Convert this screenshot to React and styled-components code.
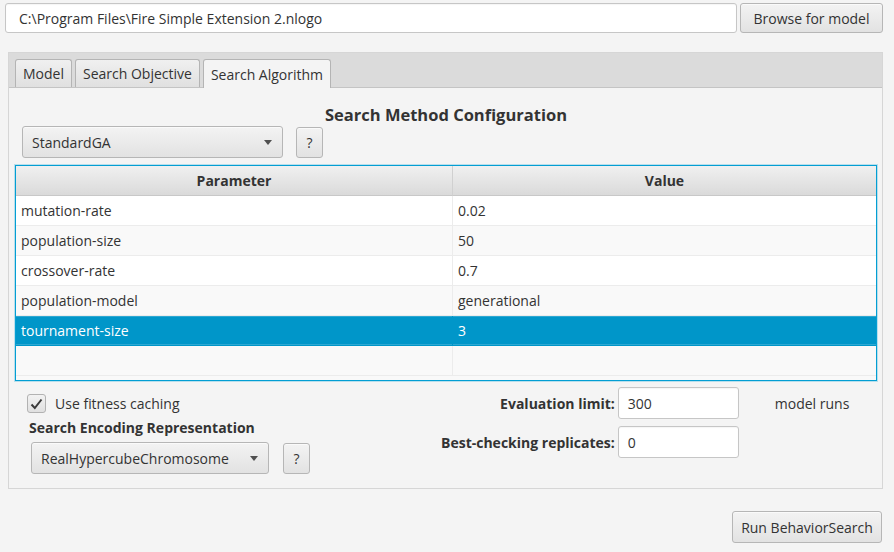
import React from "react";
import styled, { createGlobalStyle } from "styled-components";

const GlobalStyle = createGlobalStyle`
  html, body {
    margin: 0;
    padding: 0;
    background: #f4f4f4;
  }
  body {
    font-family: "Open Sans", "Noto Sans", sans-serif;
    font-size: 14px;
    color: #333;
  }
  * { box-sizing: border-box; }
`;

const Page = styled.div`
  width: 894px;
  height: 552px;
  padding: 3px 11px 0 5px;
  display: flex;
  flex-direction: column;
`;

const TopRow = styled.div`
  display: flex;
  gap: 3px;
  height: 30px;
`;

const TextField = styled.div`
  flex: ${(p) => (p.$grow ? 1 : "none")};
  width: ${(p) => (p.$width ? `${p.$width}px` : "auto")};
  height: ${(p) => p.$height || 30}px;
  background: #fff;
  border: 1px solid #c6c6c6;
  border-radius: 3px;
  box-shadow: inset 0 1px 1px rgba(0, 0, 0, 0.04);
  display: flex;
  align-items: center;
  padding: 0 ${(p) => p.$pad || 13}px;
  white-space: nowrap;
  overflow: hidden;
`;

const Button = styled.div`
  height: ${(p) => p.$height || 30}px;
  width: ${(p) => (p.$width ? `${p.$width}px` : "auto")};
  padding: 0 ${(p) => p.$pad || 12}px;
  display: flex;
  align-items: center;
  justify-content: center;
  background: linear-gradient(#f3f3f3, #e2e2e2);
  border: 1px solid #b6b6b6;
  border-radius: 3px;
  box-shadow: inset 0 1px 0 #fafafa;
  white-space: nowrap;
  flex: none;
`;

const TabPane = styled.div`
  margin: 19px 0 0 3px;
  width: 875px;
  height: 437px;
  display: flex;
  flex-direction: column;
  border: 1px solid #d6d6d6;
`;

const TabHeader = styled.div`
  height: 35px;
  background: #dbdbdb;
  display: flex;
  align-items: flex-end;
  gap: 3px;
  padding-left: 6px;
  border-bottom: 1px solid #c4c4c4;
`;

const Tab = styled.div`
  padding: 0 7px;
  display: flex;
  align-items: center;
  border: 1px solid #b4b4b4;
  border-bottom: none;
  border-radius: 3px 3px 0 0;
  background: ${(p) =>
    p.$active ? "#f4f4f4" : "linear-gradient(#f0f0f0, #e0e0e0)"};
  margin-bottom: ${(p) => (p.$active ? "-1px" : "0")};
  height: ${(p) => (p.$active ? "29px" : "28px")};
`;

const Content = styled.div`
  flex: 1;
  background: #f4f4f4;
  padding: 0 5px 0 6px;
  display: flex;
  flex-direction: column;
`;

const Title = styled.div`
  text-align: center;
  font-weight: 700;
  font-size: 16.5px;
  height: 38px;
  padding-top: 15px;
  line-height: 24px;
`;

const ComboRow = styled.div`
  display: flex;
  align-items: center;
  gap: ${(p) => p.$gap || 13}px;
  margin-left: ${(p) => p.$indent || 0}px;
  margin-top: ${(p) => p.$top || 0}px;
`;

const Combo = styled(Button)`
  justify-content: space-between;
  width: ${(p) => p.$width}px;
  height: 32px;
  padding: 0 10px 0 9px;
`;

const Arrow = styled.span`
  width: 0;
  height: 0;
  border-left: 4.5px solid transparent;
  border-right: 4.5px solid transparent;
  border-top: 5px solid #505050;
`;

const HelpButton = styled(Button)`
  width: 27px;
  height: 31px;
  padding: 0;
`;

const Table = styled.div`
  margin-top: 7px;
  height: 216px;
  border: 1px solid #039ed3;
  box-shadow: 0 0 0 1px rgba(3, 158, 211, 0.25);
  background: #f9f9f9;
  display: flex;
  flex-direction: column;
  overflow: hidden;
`;

const Grid = styled.div`
  display: grid;
  grid-template-columns: 437px 1fr;
`;

const HeaderCell = styled.div`
  height: 30px;
  display: flex;
  align-items: center;
  justify-content: center;
  font-weight: 700;
  background: linear-gradient(#f0f0f0, #dadada);
  border-bottom: 1px solid #c8c8c8;
  border-right: ${(p) => (p.$last ? "none" : "1px solid #d0d0d0")};
`;

const Cell = styled.div`
  height: 30px;
  display: flex;
  align-items: center;
  padding-left: 5px;
  background: ${(p) => (p.$selected ? "#0096c9" : p.$odd ? "#f9f9f9" : "#fff")};
  color: ${(p) => (p.$selected ? "#fff" : "#333")};
  border-bottom: 1px solid ${(p) => (p.$selected ? "#0096c9" : "#ececec")};
  border-right: ${(p) =>
    p.$last ? "none" : `1px solid ${p.$selected ? "#0096c9" : "#ececec"}`};
  box-shadow: ${(p) =>
    p.$selected ? "inset 0 1px 0 #2ea8d2, inset 0 -1px 0 #2ea8d2" : "none"};
`;

const Bottom = styled.div`
  display: flex;
  align-items: flex-start;
  margin-top: 6px;
`;

const LeftColumn = styled.div`
  width: 426px;
  padding-left: 12px;
  display: flex;
  flex-direction: column;
`;

const CheckRow = styled.div`
  display: flex;
  align-items: center;
  gap: 9px;
  height: 19px;
  margin-top: 7px;
`;

const CheckBox = styled.div`
  width: 19px;
  height: 19px;
  border: 1px solid #b2b2b2;
  border-radius: 3px;
  background: linear-gradient(#f2f2f2, #e0e0e0);
  display: flex;
  align-items: center;
  justify-content: center;
`;

const SectionLabel = styled.div`
  font-weight: 700;
  margin: 5px 0 0 2px;
  line-height: 20px;
`;

const FormGrid = styled.div`
  display: grid;
  grid-template-columns: auto 121px auto;
  align-content: start;
  column-gap: 3px;
  row-gap: 7px;
  align-items: center;
`;

const FieldLabel = styled.div`
  font-weight: 700;
  text-align: right;
`;

const Unit = styled.div`
  padding-left: 33px;
`;

const Footer = styled.div`
  display: flex;
  justify-content: flex-end;
  margin-top: 22px;
  padding-right: 1px;
`;

const rows = [
  ["mutation-rate", "0.02"],
  ["population-size", "50"],
  ["crossover-rate", "0.7"],
  ["population-model", "generational"],
  ["tournament-size", "3"],
  ["", ""],
];

export default function App() {
  return (
    <>
      <GlobalStyle />
      <Page>
        <TopRow>
          <TextField $grow>C:\Program Files\Fire Simple Extension 2.nlogo</TextField>
          <Button $width={143}>Browse for model</Button>
        </TopRow>
        <TabPane>
          <TabHeader>
            <Tab>Model</Tab>
            <Tab>Search Objective</Tab>
            <Tab $active>Search Algorithm</Tab>
          </TabHeader>
          <Content>
            <Title>Search Method Configuration</Title>
            <ComboRow $indent={7}>
              <Combo $width={261}>
                StandardGA
                <Arrow />
              </Combo>
              <HelpButton>?</HelpButton>
            </ComboRow>
            <Table>
              <Grid>
                <HeaderCell>Parameter</HeaderCell>
                <HeaderCell $last>Value</HeaderCell>
                {rows.map(([name, value], i) => (
                  <React.Fragment key={i}>
                    <Cell $odd={i % 2 === 1} $selected={i === 4}>
                      {name}
                    </Cell>
                    <Cell $odd={i % 2 === 1} $selected={i === 4} $last>
                      {value}
                    </Cell>
                  </React.Fragment>
                ))}
              </Grid>
            </Table>
            <Bottom>
              <LeftColumn>
                <CheckRow>
                  <CheckBox>
                    <svg width="13" height="12" viewBox="0 0 13 12">
                      <path
                        d="M1.5 6.5 L4.8 10 L11.5 1.5"
                        fill="none"
                        stroke="#3a3a3a"
                        strokeWidth="2"
                      />
                    </svg>
                  </CheckBox>
                  Use fitness caching
                </CheckRow>
                <SectionLabel>Search Encoding Representation</SectionLabel>
                <ComboRow $gap={14} $indent={4} $top={4}>
                  <Combo $width={238}>
                    RealHypercubeChromosome
                    <Arrow />
                  </Combo>
                  <HelpButton>?</HelpButton>
                </ComboRow>
              </LeftColumn>
              <FormGrid>
                <FieldLabel>Evaluation limit:</FieldLabel>
                <TextField $width={121} $height={32} $pad={9}>300</TextField>
                <Unit>model runs</Unit>
                <FieldLabel>Best-checking replicates:</FieldLabel>
                <TextField $width={121} $height={32} $pad={9}>0</TextField>
                <div />
              </FormGrid>
            </Bottom>
          </Content>
        </TabPane>
        <Footer>
          <Button $width={150} $height={32}>Run BehaviorSearch</Button>
        </Footer>
      </Page>
    </>
  );
}
